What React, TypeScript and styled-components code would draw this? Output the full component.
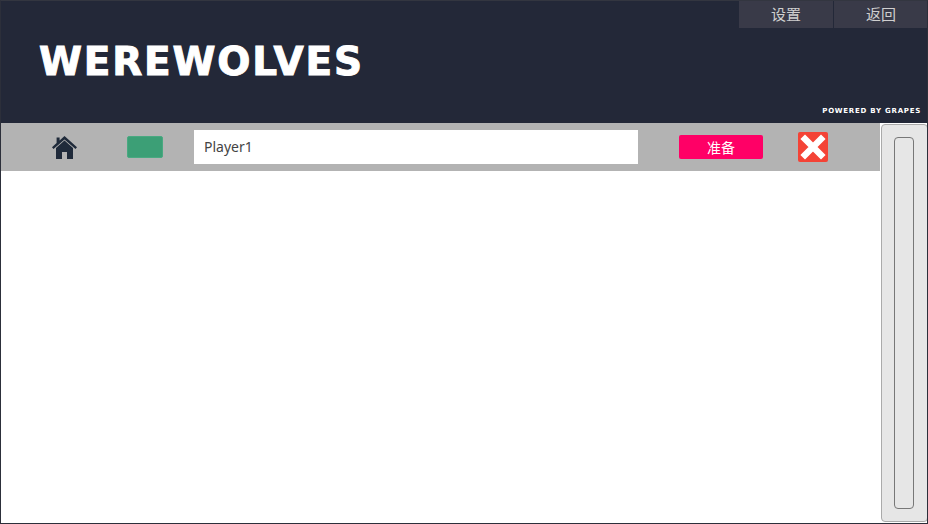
import styled, { createGlobalStyle } from 'styled-components';

const GlobalStyle = createGlobalStyle`
  html, body {
    margin: 0;
    padding: 0;
    background: #ffffff;
  }
`;

const Page = styled.div`
  box-sizing: border-box;
  width: 928px;
  height: 524px;
  display: flex;
  flex-direction: column;
  border: 1px solid #2c2f3a;
  border-top-color: #333640;
  font-family: "Noto Sans", "Noto Sans CJK SC", sans-serif;
  overflow: hidden;
`;

const Header = styled.header`
  height: 122px;
  flex: none;
  display: flex;
  flex-direction: column;
  background: #232838;
`;

const TopNav = styled.nav`
  display: flex;
  justify-content: flex-end;
  gap: 1px;
  margin-right: -1px;
`;

const NavButton = styled.button`
  width: 94px;
  height: 27px;
  padding: 0 0 1px;
  border: none;
  background: #393a48;
  color: #cfcfcf;
  font-family: "Noto Sans CJK SC", sans-serif;
  font-size: 15px;
  line-height: 26px;
`;

const Title = styled.h1`
  margin: 16px 0 0 38px;
  font-family: "DejaVu Sans", sans-serif;
  font-size: 39px;
  font-weight: 700;
  line-height: 36px;
  letter-spacing: 1.8px;
  color: #ffffff;
  -webkit-text-stroke: 1px #ffffff;
`;

const Powered = styled.div`
  margin: auto 6px 7px 0;
  text-align: right;
  font-family: "DejaVu Sans", sans-serif;
  font-size: 7px;
  font-weight: 700;
  line-height: 9px;
  letter-spacing: 0.75px;
  color: #ffffff;
`;

const Main = styled.div`
  flex: 1;
  min-height: 0;
  display: flex;
`;

const Content = styled.div`
  flex: 1;
  min-width: 0;
  padding-right: 1px;
  background: #ffffff;
`;

const Toolbar = styled.div`
  height: 48px;
  display: flex;
  align-items: center;
  padding-left: 51px;
  background: #b3b3b3;
`;

const HomeLink = styled.a`
  display: flex;
  width: 25px;
  height: 23px;
  margin-right: 50px;
`;

const ColorSwatch = styled.div<{ $color: string }>`
  box-sizing: border-box;
  width: 36px;
  height: 22px;
  margin-right: 31px;
  border: 1px solid #49a981;
  border-radius: 2px;
  background: ${(p) => p.$color};
`;

const NameInput = styled.input`
  box-sizing: border-box;
  width: 444px;
  height: 34px;
  margin-right: 41px;
  padding: 0 10px 2px;
  border: none;
  border-radius: 0;
  outline: none;
  background: #ffffff;
  color: #444444;
  font-family: "Noto Sans", sans-serif;
  font-size: 14px;
`;

const ReadyButton = styled.button`
  width: 84px;
  height: 24px;
  margin-right: 35px;
  padding: 0;
  border: none;
  border-radius: 2px;
  background: #ff0066;
  color: #ffffff;
  font-family: "Noto Sans CJK SC", sans-serif;
  font-size: 14px;
  line-height: 24px;
`;

const CloseIcon = styled.svg`
  display: block;
  width: 30px;
  height: 30px;
`;

const ScrollTrack = styled.div`
  box-sizing: border-box;
  flex: none;
  width: 47px;
  margin: 1px -1px 1px 0;
  padding: 12px 13px 12px 12px;
  display: flex;
  background: #e6e6e6;
  border: 1px solid #aaaaaa;
  border-radius: 4px;
`;

const ScrollThumb = styled.div`
  flex: 1;
  border: 1px solid #777777;
  border-radius: 4px;
  background: #e6e6e6;
`;

export default function App() {
  return (
    <>
      <GlobalStyle />
      <Page>
        <Header>
          <TopNav>
            <NavButton>设置</NavButton>
            <NavButton>返回</NavButton>
          </TopNav>
          <Title>WEREWOLVES</Title>
          <Powered>POWERED BY GRAPES</Powered>
        </Header>
        <Main>
          <Content>
            <Toolbar>
              <HomeLink>
                <svg width="25" height="23" viewBox="0 0 25 23">
                  <path
                    fill="#1f2a3a"
                    d="M12.5 0 25 11.2l-1.5 1.8L12.5 3.4 1.5 13 0 11.2l4.6-4.1V1.6h3v2.8z"
                  />
                  <path
                    fill="#1f2a3a"
                    d="M12.5 4.4 21 12v11h-6v-7h-5v7H4V12z"
                  />
                </svg>
              </HomeLink>
              <ColorSwatch $color="#3c9f76" />
              <NameInput defaultValue="Player1" />
              <ReadyButton>准备</ReadyButton>
              <CloseIcon viewBox="0 0 30 30">
                <rect width="30" height="30" rx="2" fill="#f44336" />
                <path
                  d="M7 7 23 23M23 7 7 23"
                  stroke="#ffffff"
                  strokeWidth="6.5"
                  strokeLinecap="square"
                />
              </CloseIcon>
            </Toolbar>
          </Content>
          <ScrollTrack>
            <ScrollThumb />
          </ScrollTrack>
        </Main>
      </Page>
    </>
  );
}
